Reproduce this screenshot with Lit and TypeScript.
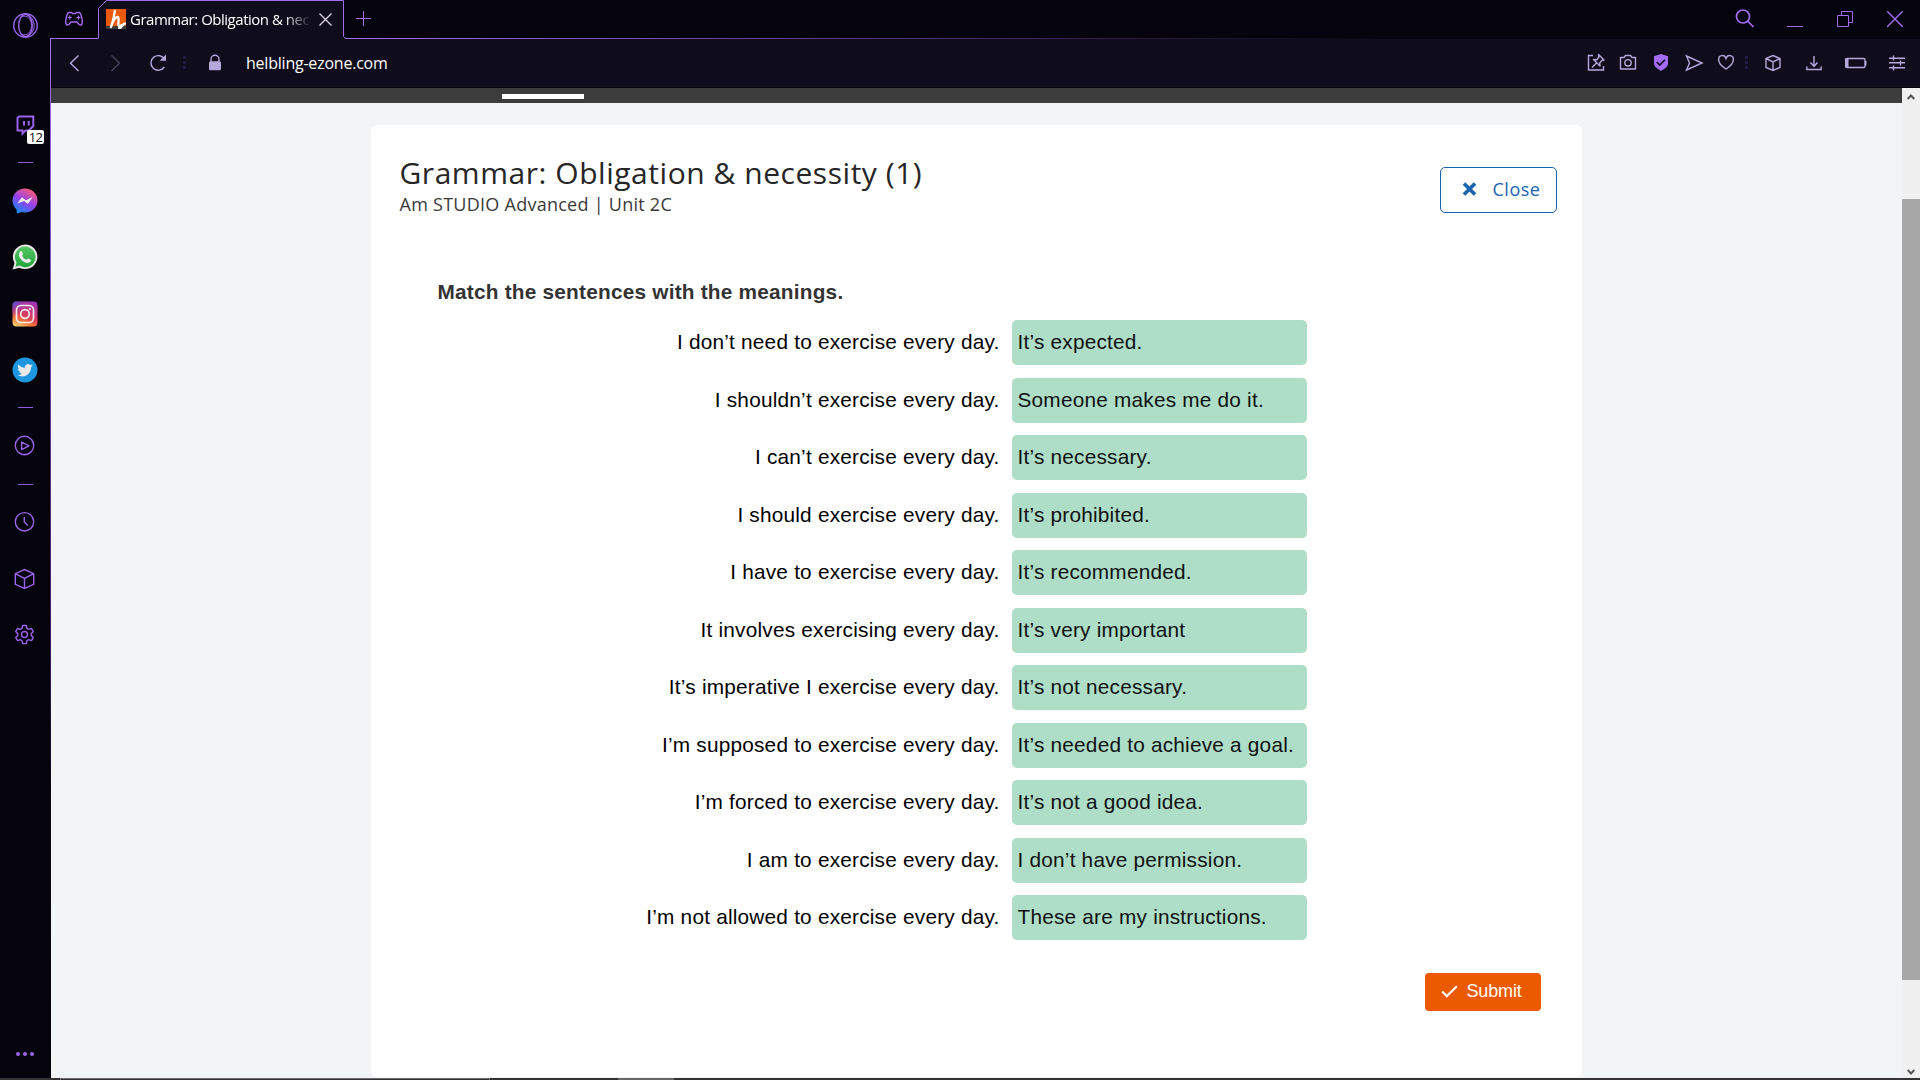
import { LitElement, html, css, svg, TemplateResult } from "lit";
import { customElement } from "lit/decorators.js";

const icon = (name: string, size: number, body: TemplateResult) => html`
  <svg class="ic ${name}" width=${size} height=${size} viewBox="0 0 ${size} ${size}" fill="none"
    stroke="currentColor" stroke-width="1.4">${body}</svg>`;

const cube = svg`<path d="M13 3.5 22.2 7.7V18.3L13 22.5 3.8 18.3V7.7Z M3.8 7.7 13 12.4 22.2 7.7 M13 12.4V22.5"/>`;

/** Left rail: application shortcuts of the browser. */
@customElement("browser-rail")
export class BrowserRail extends LitElement {
  static styles = css`
    :host { display: block; width: 50px; height: 1078px; background: #05030c; color: #9a63ea; }
    .rail {
      display: grid; height: 100%; justify-items: center; align-items: center;
      grid-template-rows: 51px 48px 52px 23px 53px 60px 54px 58px 17px 60px 17px 57px 58px 53px 1fr 49px;
    }
    .ic { display: block; }
    .sep { width: 15px; height: 1px; margin-left: 1px; background: #8e5ad6; }
    .badged { position: relative; }
    .badge {
      position: absolute; left: 15px; top: 18px; width: 17px; height: 14px; border-radius: 2px;
      background: #fff; color: #1a1020; text-align: center;
      font: 13px/14px "Open Sans", sans-serif; letter-spacing: -.6px;
    }
  `;
  render() {
    return html`
      <div class="rail">
        ${icon("opera", 26, svg`<g transform="translate(0 -.5)"><circle cx="13.5" cy="13" r="11.8"/><ellipse cx="13.5" cy="13" rx="6.8" ry="11.2"/>
          <path d="M15.5 2.6a9.2 10.8 0 0 1 0 20.8M9 4.5c6-3 10.5 2 10.500 8.500s-4.500 11.500-10.500 8.500" stroke-width="1"/></g>`)}
        <span></span>
        <div class="badged">
          ${icon("twitch", 26, svg`<path stroke-width="2" d="M5.500 6 7 4.600H21.300V14L17 18.500H13.500L10.500 21.500V18.500H5.500Z"/>
            <path stroke-width="2" d="M12 9v4.500M16.700 9v4.500"/>`)}
          <span class="badge">12</span>
        </div>
        <span class="sep"></span>
        <svg class="ic" width="26" height="26" viewBox="0 0 26 26">
          <defs><linearGradient id="ms" x1=".2" y1="1" x2=".75" y2="0">
            <stop offset="0" stop-color="#0b90f5"/><stop offset=".5" stop-color="#9440ee"/><stop offset="1" stop-color="#ff5f70"/>
          </linearGradient></defs>
          <path fill="url(#ms)" d="M13 .5C6 .5.500 5.700.500 12.500c0 3.600 1.600 6.500 4 8.700l.3 4 .9.300 3.600-1.500c1.200.300 2.400.500 3.700.500 7 0 12.500-5.200 12.500-12S20 .500 13 .500Z"/>
          <path fill="#ececec" d="m5.300 15.500 4.600-6.200 3.900 2.900 6.900-3.200-4.800 7-3.800-3Z"/>
        </svg>
        <svg class="ic" width="26" height="26" viewBox="0 0 26 26">
          <defs><linearGradient id="wa" x1="0" y1="0" x2="0" y2="1">
            <stop offset="0" stop-color="#58c763"/><stop offset="1" stop-color="#20a63b"/></linearGradient></defs>
          <path fill="#e9e9e9" d="M13.200.500a12.300 12.300 0 0 0-10.700 18.400L.600 25.500l6.800-1.800A12.300 12.300 0 1 0 13.200.500Z"/>
          <path fill="url(#wa)" d="M13.200 2.600a10.300 10.300 0 0 0-8.600 15.900l-1.200 4.200 4.300-1.100a10.300 10.300 0 1 0 5.500-19Z"/>
          <path fill="#ececec" d="M8.400 7.300c.600-.500 1.400-.300 1.600.200l1 2.300c.200.500-.900 1.600-.9 1.900.9 1.800 2.300 3.200 4.200 4 .400.100 1.300-1.500 1.800-1.300l2.500 1.200c.500.300.100 1.800-.6 2.500-1.200 1-2.900 1.100-5.600-.1-2.400-1-4.900-4.300-5.200-5.500-.500-1.800-.3-4.100 1.200-5.200Z"/>
        </svg>
        <svg class="ic" width="26" height="26" viewBox="0 0 26 26">
          <defs>
            <linearGradient id="ig" x1=".75" y1="0" x2=".3" y2="1">
              <stop offset="0" stop-color="#9b36b7"/><stop offset=".55" stop-color="#e13b5c"/><stop offset=".8" stop-color="#f47a3a"/><stop offset="1" stop-color="#fdc468"/></linearGradient>
            <radialGradient id="ig2" cx="0" cy="0" r=".6"><stop offset="0" stop-color="#4a55d0"/><stop offset="1" stop-color="#8a3ac8" stop-opacity="0"/></radialGradient>
          </defs>
          <rect x=".500" y=".500" width="25" height="25" rx="4" fill="url(#ig)"/>
          <rect x=".500" y=".500" width="25" height="25" rx="4" fill="url(#ig2)"/>
          <g fill="none" stroke="#eee" stroke-width="1.700"><rect x="4.500" y="4.500" width="17" height="17" rx="4.500"/><circle cx="13" cy="13" r="4.300"/></g>
          <circle cx="17.900" cy="8" r="1.100" fill="#eee"/>
        </svg>
        <svg class="ic" width="26" height="26" viewBox="0 0 26 26">
          <circle cx="13" cy="13" r="12.500" fill="#1d96e0"/>
          <path fill="#e9e9e9" transform="translate(5.300 5.600) scale(.64)" d="M23.950 4.570a10 10 0 0 1-2.820.770 4.960 4.960 0 0 0 2.160-2.720c-.950.550-2 .960-3.130 1.180a4.920 4.920 0 0 0-8.380 4.480C7.690 8.090 4.070 6.130 1.640 3.160a4.820 4.820 0 0 0-.670 2.480c0 1.710.870 3.210 2.190 4.100a4.900 4.900 0 0 1-2.230-.620v.060a4.920 4.920 0 0 0 3.950 4.830 5 5 0 0 1-2.210.080 4.940 4.940 0 0 0 4.600 3.420A9.870 9.870 0 0 1 0 19.540a14 14 0 0 0 7.550 2.210c9.050 0 14-7.500 14-13.980 0-.210 0-.420-.020-.630a9.940 9.940 0 0 0 2.460-2.550Z"/>
        </svg>
        <span class="sep"></span>
        ${icon("play", 26, svg`<circle cx="12.500" cy="12.500" r="9.200"/><path d="M9.600 9v7.600l7.400-3.800Z" stroke-linejoin="round"/>`)}
        <span class="sep"></span>
        ${icon("clock", 26, svg`<circle cx="12.500" cy="12.800" r="9.200"/><path d="M12.300 8v5l3.500 3.600"/>`)}
        ${icon("cube", 26, svg`<g transform="translate(-.5 0)">${cube}</g>`)}
        ${icon("gear", 26, svg`<g transform="translate(0 -.5)"><circle cx="12.500" cy="13" r="3"/>
          <path stroke-linejoin="round" d="M10.700 4h3.600l.700 3 1.600.900 2.900-.9 1.800 3.100-2.100 2.100v1.700l2.100 2.100-1.800 3.100-2.900-.9-1.600.900-.7 3h-3.600l-.7-3-1.600-.9-2.900.900-1.800-3.100 2.100-2.100v-1.700l-2.100-2.100 1.800-3.100 2.900.900 1.600-.9Z"/></g>`)}
        <span></span>
        ${icon("more", 26, svg`<g fill="currentColor" stroke="none"><circle cx="6" cy="13" r="2"/><circle cx="13" cy="13" r="2"/><circle cx="20" cy="13" r="2"/></g>`)}
      </div>`;
  }
}

/** Tab strip and address bar. */
@customElement("browser-chrome")
export class BrowserChrome extends LitElement {
  static styles = css`
    :host { display: block; font-family: "Open Sans", sans-serif; }
    .ic { display: block; }
    .tabs { display: flex; height: 39px; background: #05030c; color: #a46cf5; position: relative; }
    .line { position: absolute; left: 294px; right: 0; bottom: 0; height: 1px;
      background: linear-gradient(90deg, #a46cf5 0, #a46cf500 1050px); }
    .line.start { left: 0; right: auto; width: 48px; background: #a46cf5; }
    .slot { display: flex; align-items: center; justify-content: center; }
    .game { width: 48px; height: 38px; }
    .tab { position: relative; width: 246px; height: 39px; display: flex; align-items: center; }
    .outline { position: absolute; left: 0; top: 0; }
    .fav { position: relative; margin-left: 8px; margin-top: -1px; }
    .title {
      position: relative; margin-left: 4px; width: 181px; height: 39px; overflow: hidden; white-space: nowrap;
      color: #fff; font-size: 15px; line-height: 39px; letter-spacing: -.48px;
      -webkit-mask-image: linear-gradient(90deg, #000 154px, transparent 182px);
    }
    .x { position: relative; margin-left: 2px; color: #dcd8e6; }
    .plus { width: 39px; height: 37px; }
    .win { display: grid; grid-template-columns: repeat(4, 50px); margin-left: auto; height: 38px; }
    .bar { display: flex; height: 49px; align-items: center; background: #0f0c1b; color: #b5a8dc; box-sizing: border-box; border-bottom: 1px solid #08060f; }
    .nav { display: grid; grid-template-columns: 48px 35px 50px 3px 57px; height: 48px; }
    .fwd { opacity: .32; }
    .dots { opacity: .18; }
    .url { margin-left: 3px; color: #fff; font-size: 16px; letter-spacing: -.22px; line-height: 48px; }
    .tools { display: grid; margin-left: auto; padding-right: 5px; height: 48px;
      grid-template-columns: 32px 32px 34px 31px 34px 7px 45px 37px 47px 36px; }
  `;
  render() {
    const slot = (c: unknown, k = "") => html`<span class="slot ${k}">${c}</span>`;
    const dots = html`<svg class="ic dots" width="3" height="14" viewBox="0 0 3 14"><path fill="#7a5cff" d="M0 0h3v3H0zM0 5h3v3H0zM0 10h3v3H0z"/></svg>`;
    return html`
      <div class="tabs">
        <span class="line start"></span><span class="line"></span>
        ${slot(html`<svg class="ic" width="20" height="16" viewBox="0 0 20 16" fill="none" stroke="currentColor" stroke-width="1.400">
          <path d="M5 1.500h2.500l1 1h3l1-1H15c1.600.300 2.300 2.300 3 6.500.500 3 .500 5.400-1 6-1.800.600-2.600-1.500-4-3H7c-1.400 1.500-2.200 3.600-4 3-1.500-.6-1.500-3-1-6 .700-4.200 1.400-6.200 3-6.500Z"/>
          <path d="M5.800 4.500v4M3.800 6.500h4M12.500 6.500h4M14.500 4.500v4" stroke-width="1.200"/></svg>`, "game")}
        <div class="tab">
          <svg class="outline" width="248" height="39" viewBox="0 0 248 39">
            <path d="M.500 39V8.500L8.500.500H245.500V37L247 38.500H248V39Z" fill="#0f0c1b"/>
            <path d="M.500 38.500V8.500L8.500.500H245.500V36.500L247.500 38.500" fill="none" stroke="#a46cf5"/>
          </svg>
          <svg class="ic fav" width="20" height="20" viewBox="0 0 20 20">
            <path fill="#ea5b0c" d="M0 0h20v20H0z"/><path fill="#3b3b3b" d="M0 17h20v3H0z"/>
            <path fill="none" stroke="#fff" stroke-width="2.400" stroke-linecap="round" stroke-linejoin="round" d="M8.800 2C8.300 7 7 12.500 5 18 6.800 12 9 8.500 11.500 8c2 .200.800 4.500.800 7.500.200 3 3.300.800 6.700-1"/>
            <path fill="#fff" d="m12 18.500 8-4.500-5 6h-3z"/>
          </svg>
          <span class="title">Grammar: Obligation &amp; necessity</span>
          <svg class="ic x" width="25" height="25" viewBox="0 0 25 25" stroke="currentColor" stroke-width="1.300"><path d="m6.500 6.500 12 12m0-12-12 12"/></svg>
        </div>
        ${slot(html`<svg class="ic" width="15" height="15" viewBox="0 0 15 15" stroke="currentColor"><path d="M7.500 0v15M0 7.500h15"/></svg>`, "plus")}
        <div class="win">
          ${slot(html`<svg class="ic" width="20" height="20" viewBox="0 0 20 20" fill="none" stroke="currentColor" stroke-width="1.700"><circle cx="8" cy="7.500" r="6.500"/><path d="m12.500 12 6 6"/></svg>`)}
          ${slot(html`<svg class="ic" width="16" height="18" viewBox="0 0 16 18" stroke="currentColor"><path d="M0 16.500h16"/></svg>`)}
          ${slot(html`<svg class="ic" width="16" height="16" viewBox="0 0 16 16" fill="none" stroke="currentColor"><path d="M.500 4.500h11v11H.500zM4.500 4.500v-4h11v11h-4"/></svg>`)}
          ${slot(html`<svg class="ic" width="16" height="16" viewBox="0 0 16 16" stroke="currentColor" stroke-width="1.400"><path d="m0 0 16 16M16 0 0 16"/></svg>`)}
        </div>
      </div>
      <div class="bar">
        <div class="nav">
          ${slot(icon("back", 24, svg`<path d="m16.500 4.500-8 7.700 8 7.800"/>`))}
          ${slot(icon("forward", 24, svg`<path d="m7.500 4.500 8 7.700-8 7.800"/>`), "fwd")}
          ${slot(icon("reload", 24, svg`<path d="M18.700 8.500A7.300 7.300 0 1 0 18.300 16"/><path d="M20 3.500v6.300h-6.300Z" fill="currentColor" stroke="none"/>`))}
          ${slot(dots)}
          ${slot(icon("lock", 24, svg`<path d="M8 11V8.300a4 4 0 0 1 8 0V11"/><rect x="6" y="10.200" width="12" height="9" rx="1.500" fill="currentColor" stroke="none"/>`))}
        </div>
        <span class="url">helbling-ezone.com</span>
        <div class="tools">
          ${slot(icon("pin", 24, svg`<path d="M9 4.500H4.500v14.500h15v-4"/><path stroke-linejoin="round" d="m14.500 3.500 5.500 5.500-1.800.200-2.400 2.500.2 3.300-6.500-6.500 3.300.200 2-2.500ZM12.500 12 8 16.500"/>`))}
          ${slot(icon("camera", 24, svg`<path d="M4.500 6.500H8L9.500 4.500h5L16 6.500h3.500v11.500h-15Z" stroke-linejoin="round"/><circle cx="12" cy="11.800" r="3.200"/>`))}
          ${slot(icon("shield", 24, svg`<path fill="#a46cf5" stroke="none" d="m12 3 7 2.200v7.300c0 3-3 5-7 7.500-4-2.500-7-4.500-7-7.500V5.200Z"/><path stroke="#0f0c1b" stroke-width="1.600" d="m7.700 11 3 3 5.300-5.200"/>`))}
          ${slot(icon("send", 24, svg`<path d="M4.500 5 20 12 4.500 19l3-7Z"/>`))}
          ${slot(icon("heart", 24, svg`<path d="M12 18C8 15.500 4.600 12 4.600 8.500c0-4.800 6-5.300 7.400-1 1.400-4.300 7.400-3.800 7.400 1 0 3.500-3.400 7-7.400 9.500Z"/>`))}
          ${slot(dots)}
          ${slot(icon("cube", 24, svg`<path d="m12 4.500 7 3v9l-7 3-7-3v-9ZM5 7.500l7 3.500 7-3.500M12 11v8.500"/>`))}
          ${slot(icon("download", 24, svg`<path d="M12 5v10.500m-3.500-4 3.500 4 3.500-4M4.800 15.500V18.500h14.400V15.500"/>`))}
          ${slot(icon("battery", 24, svg`<path d="M3 7.500H19.500q1.500 0 1.500 1.500v6q0 1.500-1.500 1.500H3q-1.200 0-1.200-1.500V9q0-1.500 1.200-1.500Z"/><path fill="currentColor" stroke="none" d="M1 7.500H4.500v9H1zM21 10H22.500v4.500h-1.500z"/>`))}
          ${slot(icon("sliders", 24, svg`<path d="M4 7.200h16M4 11.700h16M4 16.700h16M8.500 4.500v5M15.500 9.500v5M8.500 14.500v5"/>`))}
        </div>
      </div>`;
  }
}

interface Pair { sentence: string; meaning: string; }

const pairs: Pair[] = [
  { sentence: "I don’t need to exercise every day.", meaning: "It’s expected." },
  { sentence: "I shouldn’t exercise every day.", meaning: "Someone makes me do it." },
  { sentence: "I can’t exercise every day.", meaning: "It’s necessary." },
  { sentence: "I should exercise every day.", meaning: "It’s prohibited." },
  { sentence: "I have to exercise every day.", meaning: "It’s recommended." },
  { sentence: "It involves exercising every day.", meaning: "It’s very important" },
  { sentence: "It’s imperative I exercise every day.", meaning: "It’s not necessary." },
  { sentence: "I’m supposed to exercise every day.", meaning: "It’s needed to achieve a goal." },
  { sentence: "I’m forced to exercise every day.", meaning: "It’s not a good idea." },
  { sentence: "I am to exercise every day.", meaning: "I don’t have permission." },
  { sentence: "I’m not allowed to exercise every day.", meaning: "These are my instructions." },
];

/** The matching exercise card. */
@customElement("exercise-card")
export class ExerciseCard extends LitElement {
  static styles = css`
    :host {
      display: block; box-sizing: border-box; width: 1211px; height: 952px; padding: 28px 25px 0 29px;
      border-radius: 6px; background: #fff; font-family: "Liberation Sans", Arial, sans-serif;
    }
    .head { display: flex; justify-content: space-between; height: 127px; font-family: "Open Sans", sans-serif; }
    h1 { margin: 0; font-size: 30px; font-weight: 400; line-height: 40px; letter-spacing: .54px; color: #262626; }
    .unit { margin-top: -1px; font-size: 18px; line-height: 24px; letter-spacing: .26px; color: #3a3a3a; }
    .close {
      display: flex; align-items: center; box-sizing: border-box; width: 117px; height: 46px; margin-top: 14px;
      padding: 0 0 2px 21px; border: 1px solid #1964ad; border-radius: 5px; background: #fff; color: #1964ad;
      font: 500 18px/24px "Open Sans", sans-serif; letter-spacing: .5px;
    }
    .close svg { margin-right: 16px; }
    .body { margin-left: 37px; }
    h2 { margin: 0; padding-left: 1px; font-size: 20.8px; line-height: 24px; letter-spacing: .22px; color: #333; }
    .list { display: grid; grid-template-columns: 563px 295px; column-gap: 12px; row-gap: 12.5px; margin-top: 16px; }
    .sentence, .meaning {
      box-sizing: border-box; height: 45px; padding-bottom: 2px; line-height: 43px;
      font-size: 20.8px; letter-spacing: .21px; white-space: nowrap; color: #000;
    }
    .sentence { text-align: right; }
    .meaning { padding-left: 6px; border-radius: 5px; background: #aedec8; color: #111; }
    .foot { display: flex; justify-content: flex-end; margin-top: 33px; padding-right: 16px; }
    .submit {
      display: flex; align-items: center; box-sizing: border-box; width: 116px; height: 38px; padding: 0 0 2px 16px;
      border: 0; border-radius: 4px; background: #eb5a00; color: #fff;
      font: 18px/24px "Liberation Sans", Arial, sans-serif; letter-spacing: -.15px;
    }
    .submit svg { margin-right: 9px; }
  `;
  render() {
    return html`
      <div class="head">
        <div><h1>Grammar: Obligation &amp; necessity (1)</h1><div class="unit">Am STUDIO Advanced | Unit 2C</div></div>
        <button class="close">
          <svg width="15" height="14" viewBox="0 0 15 14" stroke="#1964ad" stroke-width="3.600"><path d="m2 1.500 11 11m0-11-11 11"/></svg>Close
        </button>
      </div>
      <div class="body">
        <h2>Match the sentences with the meanings.</h2>
        <div class="list">
          ${pairs.map(p => html`<div class="sentence">${p.sentence}</div><div class="meaning">${p.meaning}</div>`)}
        </div>
      </div>
      <div class="foot">
        <button class="submit">
          <svg width="17" height="13" viewBox="0 0 17 13" fill="none" stroke="#fff" stroke-width="2.200"><path d="m1.200 6.500 4.600 4.600L15.800 1.300"/></svg>Submit
        </button>
      </div>`;
  }
}

@customElement("app-root")
export class AppRoot extends LitElement {
  static styles = css`
    :host { display: block; width: 1920px; height: 1080px; overflow: hidden; background: #f3f4f6; }
    .window { display: flex; height: 1078px; }
    .main { position: relative; flex: 1; min-width: 0; display: flex; flex-direction: column; }
    .edge { position: absolute; left: 0; top: 38px; width: 1px; height: 1040px;
      background: linear-gradient(#a46cf5 0, #9a63e8 80px, #3b2059 600px, #120a20 750px, #05030c 100%); }
    .content { flex: 1; display: flex; min-height: 0; }
    .page { flex: 1; display: flex; flex-direction: column; align-items: center; background: #f3f4f6; }
    .menu { width: 100%; height: 15px; background: #3b3c3b; box-sizing: border-box; padding: 6px 0 0 452px; }
    .active { width: 82px; height: 5px; background: #fff; }
    exercise-card { margin-top: 22px; }
    .scroll { width: 18px; display: flex; flex-direction: column; align-items: center; background: #f0f0f0; }
    .thumb { width: 18px; height: 781px; margin-top: 100px; background: #a7a7a7; }
    .scroll svg { display: block; }
    .scroll .up { margin: 6px 0 -1px; }
    .scroll .down { margin: auto 0 3px; }
    .taskbar { display: flex; height: 2px; background: #343233; }
    .field { width: 430px; box-sizing: border-box; margin-left: 60px; border: 1px solid #6b6b6b; border-bottom: 0; }
    .task { width: 56px; margin-left: 128px; background: #686667; }
  `;
  render() {
    return html`
      <div class="window">
        <browser-rail></browser-rail>
        <div class="main">
          <browser-chrome></browser-chrome>
          <div class="content">
            <div class="page">
              <div class="menu"><div class="active"></div></div>
              <exercise-card></exercise-card>
            </div>
            <div class="scroll">
              <svg class="up" width="8" height="6" viewBox="0 0 8 6" fill="none" stroke="#555" stroke-width="2"><path d="m.700 5 3.300-3.500L7.300 5"/></svg>
              <div class="thumb"></div>
              <svg class="down" width="8" height="6" viewBox="0 0 8 6" fill="none" stroke="#555" stroke-width="2"><path d="m.700 1 3.300 3.500L7.300 1"/></svg>
            </div>
          </div>
          <div class="edge"></div>
        </div>
      </div>
      <div class="taskbar"><div class="field"></div><div class="task"></div></div>`;
  }
}
